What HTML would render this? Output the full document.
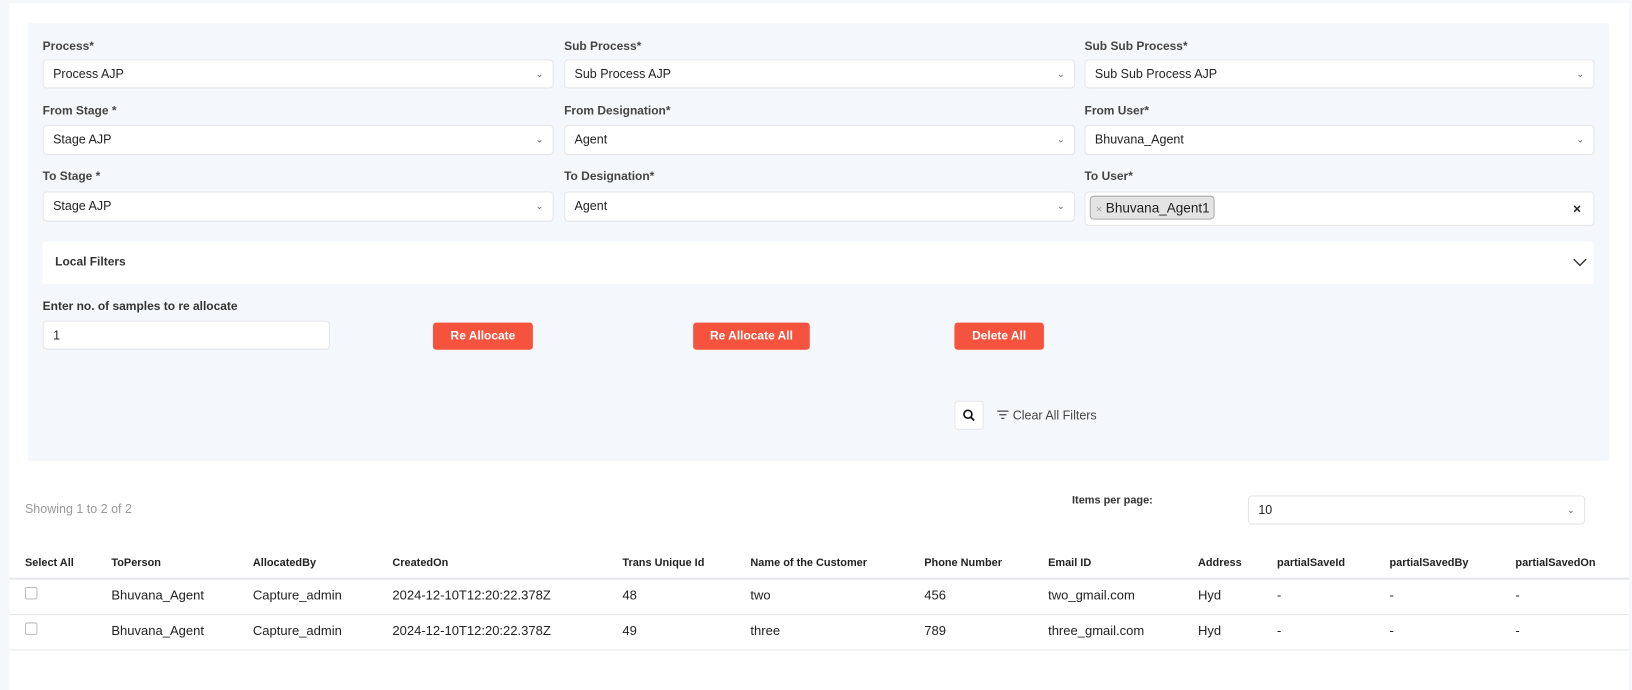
<!DOCTYPE html>
<html><head><style>
*{box-sizing:border-box;margin:0;padding:0}
body{width:1632px;height:663px;background:#f5f7fb;font-family:"Liberation Sans",sans-serif;overflow:hidden;color:#222}
#w{position:absolute;left:0;top:0;width:1568px;height:637px;transform:scale(1.0408);transform-origin:0 0}
.card{position:absolute;left:9px;top:3px;width:1556px;height:660px;background:#fff}
.panel{position:absolute;left:27px;top:22px;width:1519px;height:421px;background:#f4f7fc;border-radius:3px}
.lbl{position:absolute;font-size:11.5px;color:#444;font-weight:bold}
.in{position:absolute;background:#fff;border:1px solid #e3e6ea;border-radius:4px;font-size:12px;padding-left:9px;line-height:26px;color:#222}
.chev{position:absolute;right:9px;top:0;font-size:9px;color:#666}
.btn{position:absolute;background:#f5533d;color:#fff;font-size:11.5px;font-weight:bold;border-radius:3px;text-align:center;line-height:26px;height:26px;top:310px}
.t{position:absolute;font-size:12.5px;color:#222}
.th{position:absolute;font-size:10.5px;font-weight:bold;color:#222;top:535px}
.line{position:absolute;left:9px;width:1556px;height:1px;background:#e5e7ea}
.cb{position:absolute;left:24px;width:12px;height:12px;border:1px solid #bbb;border-radius:2px;background:#fff}
</style></head><body><div id="w">
<div class="card"></div>
<div class="panel"></div>

<div class="lbl" style="left:41px;top:39px">Process*</div>
<div class="lbl" style="left:542px;top:39px">Sub Process*</div>
<div class="lbl" style="left:1042px;top:39px">Sub Sub Process*</div>
<div class="in" style="left:41px;top:57px;width:491px;height:28px">Process AJP<span class="chev">&#8964;</span></div>
<div class="in" style="left:542px;top:57px;width:491px;height:28px">Sub Process AJP<span class="chev">&#8964;</span></div>
<div class="in" style="left:1042px;top:57px;width:490px;height:28px">Sub Sub Process AJP<span class="chev">&#8964;</span></div>

<div class="lbl" style="left:41px;top:101px">From Stage *</div>
<div class="lbl" style="left:542px;top:101px">From Designation*</div>
<div class="lbl" style="left:1042px;top:101px">From User*</div>
<div class="in" style="left:41px;top:120px;width:491px;height:29px">Stage AJP<span class="chev">&#8964;</span></div>
<div class="in" style="left:542px;top:120px;width:491px;height:29px">Agent<span class="chev">&#8964;</span></div>
<div class="in" style="left:1042px;top:120px;width:490px;height:29px">Bhuvana_Agent<span class="chev">&#8964;</span></div>

<div class="lbl" style="left:41px;top:164px">To Stage *</div>
<div class="lbl" style="left:542px;top:164px">To Designation*</div>
<div class="lbl" style="left:1042px;top:164px">To User*</div>
<div class="in" style="left:41px;top:184px;width:491px;height:29px">Stage AJP<span class="chev">&#8964;</span></div>
<div class="in" style="left:542px;top:184px;width:491px;height:29px">Agent<span class="chev">&#8964;</span></div>
<div class="in" style="left:1042px;top:184px;width:490px;height:33px;padding-left:4px">
<span style="position:absolute;left:4px;top:3px;height:23px;width:120px;background:#e4e4e4;border:1px solid #aaa;border-radius:4px;font-size:13px;line-height:21px;padding-left:5px"><span style="color:#999;font-size:10px">×</span> Bhuvana_Agent1</span>
<span style="position:absolute;right:12px;top:3px;font-weight:bold;font-size:13px">×</span></div>

<div style="position:absolute;left:41px;top:232px;width:1490px;height:41px;background:#fff;border-radius:3px"></div>
<div class="lbl" style="left:53px;top:246px;color:#333">Local Filters</div>
<svg style="position:absolute;left:1511px;top:247px" width="14" height="10"><path d="M1 2 L7 8 L13 2" fill="none" stroke="#333" stroke-width="1.3"/></svg>

<div class="lbl" style="left:41px;top:289px;color:#333">Enter no. of samples to re allocate</div>
<div class="in" style="left:41px;top:308px;width:276px;height:28px">1</div>
<div class="btn" style="left:416px;width:96px">Re Allocate</div>
<div class="btn" style="left:666px;width:112px">Re Allocate All</div>
<div class="btn" style="left:917px;width:86px">Delete All</div>

<div style="position:absolute;left:917px;top:385px;width:28px;height:28px;background:#fff;border:1px solid #e3e6ea;border-radius:3px"></div>
<svg style="position:absolute;left:925px;top:393px" width="12" height="12"><circle cx="5" cy="5" r="3.8" fill="none" stroke="#111" stroke-width="1.6"/><path d="M8 8 L11 11" stroke="#111" stroke-width="1.7"/></svg>
<svg style="position:absolute;left:958px;top:394px" width="11" height="9"><path d="M0 1H11M2 4.5H9M4 8H7" stroke="#445" stroke-width="1.2"/></svg>
<div class="t" style="left:973px;top:392px;color:#444;font-size:12px">Clear All Filters</div>

<div class="t" style="left:24px;top:482px;color:#999;font-size:12px">Showing 1 to 2 of 2</div>
<div class="lbl" style="left:1030px;top:475px;font-size:10.5px;color:#333">Items per page:</div>
<div class="in" style="left:1199px;top:476px;width:324px;height:28px;line-height:26px">10<span class="chev">&#8964;</span></div>

<div class="th" style="left:24px">Select All</div>
<div class="th" style="left:107px">ToPerson</div>
<div class="th" style="left:243px">AllocatedBy</div>
<div class="th" style="left:377px">CreatedOn</div>
<div class="th" style="left:598px">Trans Unique Id</div>
<div class="th" style="left:721px">Name of the Customer</div>
<div class="th" style="left:888px">Phone Number</div>
<div class="th" style="left:1007px">Email ID</div>
<div class="th" style="left:1151px">Address</div>
<div class="th" style="left:1227px">partialSaveId</div>
<div class="th" style="left:1335px">partialSavedBy</div>
<div class="th" style="left:1456px">partialSavedOn</div>
<div class="line" style="top:555px;height:2px"></div>

<div class="cb" style="top:564px"></div>
<div class="t" style="left:107px;top:565px">Bhuvana_Agent</div>
<div class="t" style="left:243px;top:565px">Capture_admin</div>
<div class="t" style="left:377px;top:565px">2024-12-10T12:20:22.378Z</div>
<div class="t" style="left:598px;top:565px">48</div>
<div class="t" style="left:721px;top:565px">two</div>
<div class="t" style="left:888px;top:565px">456</div>
<div class="t" style="left:1007px;top:565px">two_gmail.com</div>
<div class="t" style="left:1151px;top:565px">Hyd</div>
<div class="t" style="left:1227px;top:565px">-</div>
<div class="t" style="left:1335px;top:565px">-</div>
<div class="t" style="left:1456px;top:565px">-</div>
<div class="line" style="top:590px"></div>

<div class="cb" style="top:598px"></div>
<div class="t" style="left:107px;top:599px">Bhuvana_Agent</div>
<div class="t" style="left:243px;top:599px">Capture_admin</div>
<div class="t" style="left:377px;top:599px">2024-12-10T12:20:22.378Z</div>
<div class="t" style="left:598px;top:599px">49</div>
<div class="t" style="left:721px;top:599px">three</div>
<div class="t" style="left:888px;top:599px">789</div>
<div class="t" style="left:1007px;top:599px">three_gmail.com</div>
<div class="t" style="left:1151px;top:599px">Hyd</div>
<div class="t" style="left:1227px;top:599px">-</div>
<div class="t" style="left:1335px;top:599px">-</div>
<div class="t" style="left:1456px;top:599px">-</div>
<div class="line" style="top:624px"></div>
</div></body></html>
